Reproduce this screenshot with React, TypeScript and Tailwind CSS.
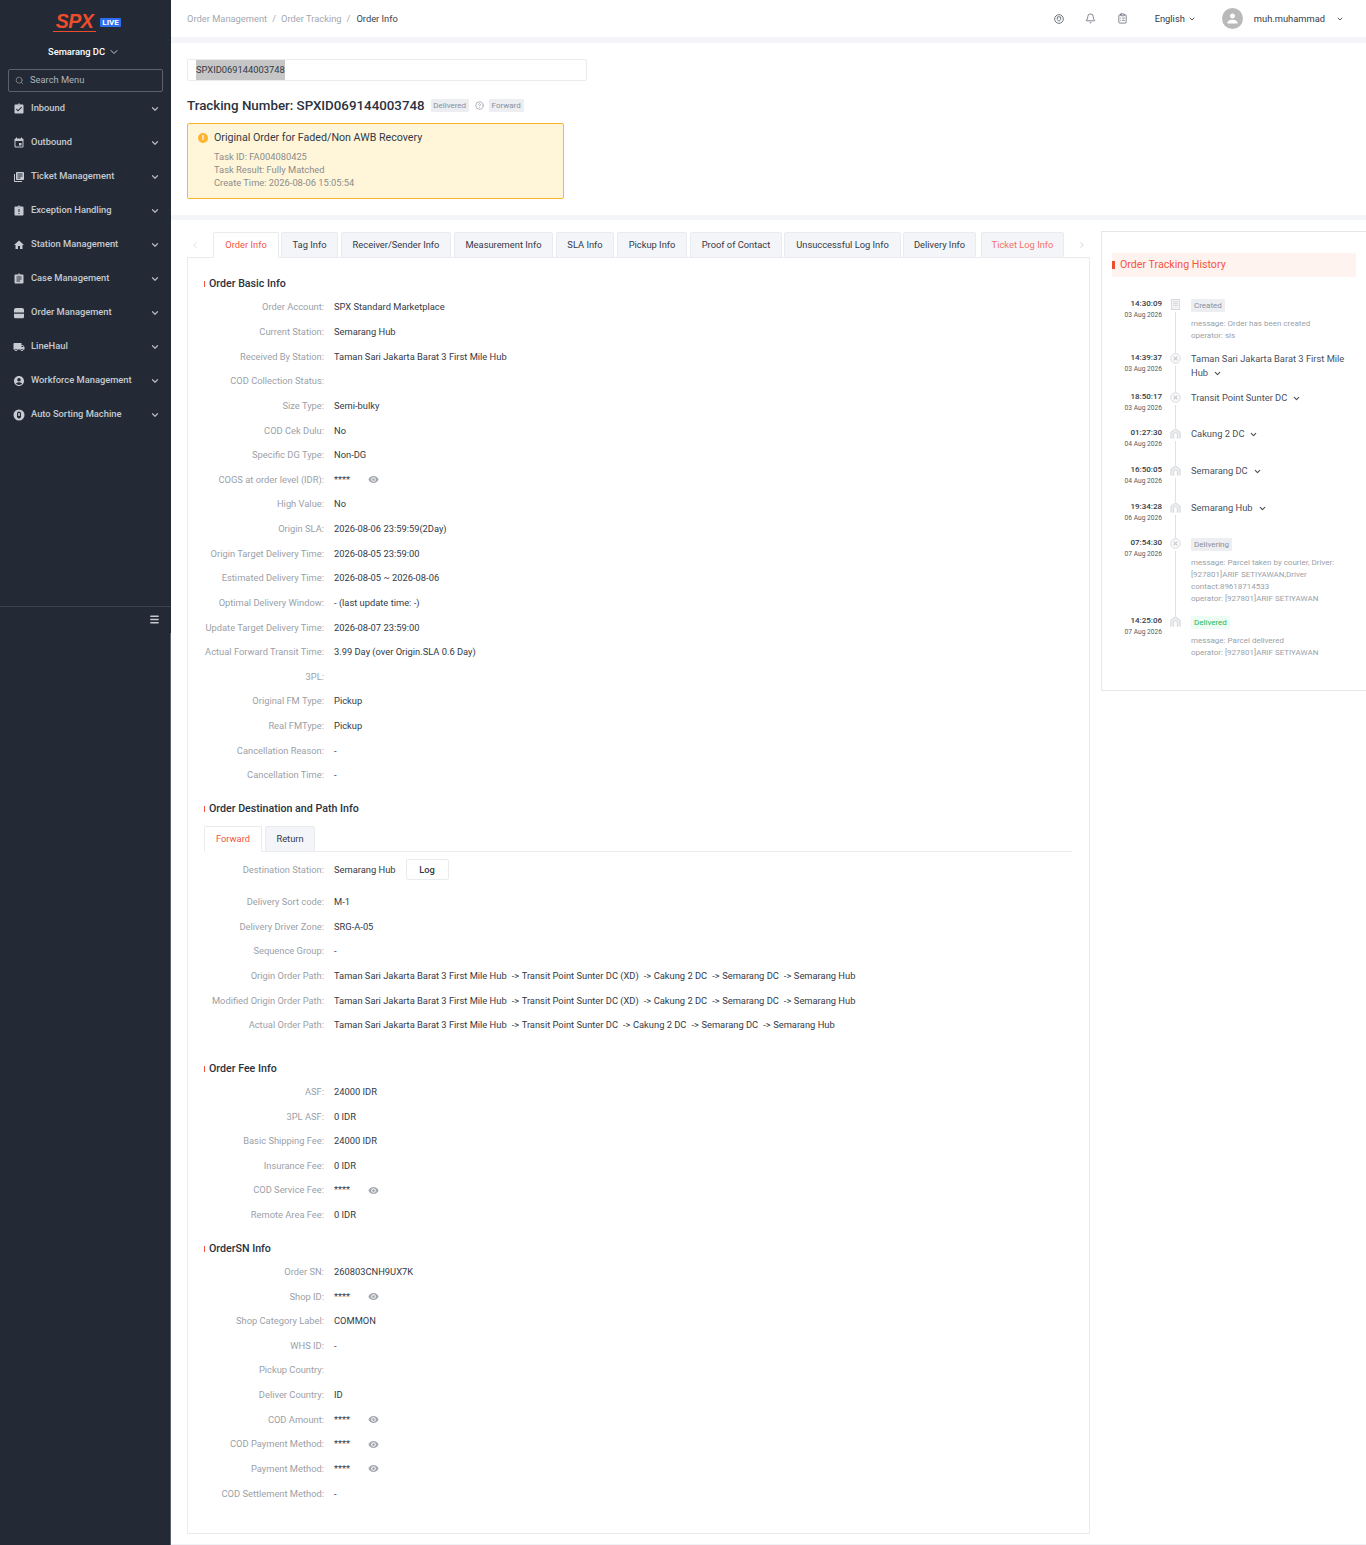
import React from 'react';
import { ChevronDown, ChevronLeft, ChevronRight, Search, Bell, ClipboardList, Menu, HelpCircle } from 'lucide-react';
import { MdAssignmentTurnedIn, MdEvent, MdLibraryBooks, MdAssignmentLate, MdHome, MdAssignment, MdLocalShipping, MdAccountCircle, MdPerson, MdRemoveRedEye } from 'react-icons/md';

function OrderIcon({ className }: { className?: string }) {
  return (
    <svg viewBox="0 0 12 12" className={className} fill="currentColor">
      <path d="M3 1h6a2 2 0 0 1 2 2v2.4H1V3a2 2 0 0 1 2-2z" />
      <path d="M1 6.8h10V10a1.2 1.2 0 0 1-1.2 1.2H2.2A1.2 1.2 0 0 1 1 10z" />
    </svg>
  );
}

function SortIcon({ className }: { className?: string }) {
  return (
    <svg viewBox="0 0 12 12" className={className}>
      <circle cx="6" cy="6" r="5.5" fill="currentColor" />
      <rect x="4" y="2.5" width="4" height="7" rx="2" fill="#232a35" />
      <rect x="5.2" y="4" width="1.6" height="3" fill="currentColor" />
    </svg>
  );
}

const menu: [string, React.ComponentType<{ className?: string }>][] = [
  ['Inbound', MdAssignmentTurnedIn],
  ['Outbound', MdEvent],
  ['Ticket Management', MdLibraryBooks],
  ['Exception Handling', MdAssignmentLate],
  ['Station Management', MdHome],
  ['Case Management', MdAssignment],
  ['Order Management', OrderIcon],
  ['LineHaul', MdLocalShipping],
  ['Workforce Management', MdAccountCircle],
  ['Auto Sorting Machine', SortIcon],
];

const tabs: [string, string, string][] = [
  ['Order Info', 'w-[66px] bg-white border-b-white text-[#f4553f]', 'mr-[2px]'],
  ['Tag Info', 'w-[57px] bg-[#f4f5f9] text-[#333a47]', 'mr-[3px]'],
  ['Receiver/Sender Info', 'w-[110px] bg-[#f4f5f9] text-[#333a47]', 'mr-[3px]'],
  ['Measurement Info', 'w-[99px] bg-[#f4f5f9] text-[#333a47]', 'mr-[3px]'],
  ['SLA Info', 'w-[58px] bg-[#f4f5f9] text-[#333a47]', 'mr-[3px]'],
  ['Pickup Info', 'w-[70px] bg-[#f4f5f9] text-[#333a47]', 'mr-[3px]'],
  ['Proof of Contact', 'w-[92px] bg-[#f4f5f9] text-[#333a47]', 'mr-[2px]'],
  ['Unsuccessful Log Info', 'w-[117px] bg-[#f4f5f9] text-[#333a47]', 'mr-[2px]'],
  ['Delivery Info', 'w-[73px] bg-[#f4f5f9] text-[#333a47]', 'mr-[5px]'],
  ['Ticket Log Info', 'w-[83px] bg-[#f4f5f9] text-[#f4706a]', ''],
];

function Row({ label, value, masked, tall }: { label: string; value?: React.ReactNode; masked?: boolean; tall?: boolean }) {
  return (
    <div className={`flex items-center ${tall ? 'mb-[4px] h-[32px]' : 'h-[24.63px]'}`}>
      <div className="w-[120px] shrink-0 text-right text-[#9b9fa8] whitespace-nowrap">{label}:</div>
      <div className="ml-[10px] flex items-center text-[#333a47] whitespace-nowrap">
        {masked ? (
          <>
            <span className="w-[34px]">****</span>
            <MdRemoveRedEye className="h-[11px] w-[11px] text-[#a3a7af]" />
          </>
        ) : (
          value
        )}
      </div>
    </div>
  );
}

function Title({ children }: { children: React.ReactNode }) {
  return (
    <div className="flex h-[16px] items-center text-[10.67px] font-medium text-[#2b3240]">
      <span className="mr-[4px] h-[6px] w-[1px] bg-[#f4553f]" />
      {children}
    </div>
  );
}

function PathText({ path }: { path: string[] }) {
  return (
    <span>
      {path.map((p, i) => (
        <React.Fragment key={p}>
          {i > 0 && <span className="inline-block w-[15px] pl-[5px]">-&gt;</span>}
          {p}
        </React.Fragment>
      ))}
    </span>
  );
}

const basic: [string, string?, boolean?][] = [
  ['Order Account', 'SPX Standard Marketplace'],
  ['Current Station', 'Semarang Hub'],
  ['Received By Station', 'Taman Sari Jakarta Barat 3 First Mile Hub'],
  ['COD Collection Status', ''],
  ['Size Type', 'Semi-bulky'],
  ['COD Cek Dulu', 'No'],
  ['Specific DG Type', 'Non-DG'],
  ['COGS at order level (IDR)', '', true],
  ['High Value', 'No'],
  ['Origin SLA', '2026-08-06 23:59:59(2Day)'],
  ['Origin Target Delivery Time', '2026-08-05 23:59:00'],
  ['Estimated Delivery Time', '2026-08-05 ~ 2026-08-06'],
  ['Optimal Delivery Window', '- (last update time: -)'],
  ['Update Target Delivery Time', '2026-08-07 23:59:00'],
  ['Actual Forward Transit Time', '3.99 Day (over Origin.SLA 0.6 Day)'],
  ['3PL', ''],
  ['Original FM Type', 'Pickup'],
  ['Real FMType', 'Pickup'],
  ['Cancellation Reason', '-'],
  ['Cancellation Time', '-'],
];

const originPath = ['Taman Sari Jakarta Barat 3 First Mile Hub', 'Transit Point Sunter DC (XD)', 'Cakung 2 DC', 'Semarang DC', 'Semarang Hub'];
const actualPath = ['Taman Sari Jakarta Barat 3 First Mile Hub', 'Transit Point Sunter DC', 'Cakung 2 DC', 'Semarang DC', 'Semarang Hub'];

const dest: [string, React.ReactNode][] = [
  ['Delivery Sort code', 'M-1'],
  ['Delivery Driver Zone', 'SRG-A-05'],
  ['Sequence Group', '-'],
  ['Origin Order Path', <PathText path={originPath} />],
  ['Modified Origin Order Path', <PathText path={originPath} />],
  ['Actual Order Path', <PathText path={actualPath} />],
];

const fee: [string, string?, boolean?][] = [
  ['ASF', '24000 IDR'],
  ['3PL ASF', '0 IDR'],
  ['Basic Shipping Fee', '24000 IDR'],
  ['Insurance Fee', '0 IDR'],
  ['COD Service Fee', '', true],
  ['Remote Area Fee', '0 IDR'],
];

const sn: [string, string?, boolean?][] = [
  ['Order SN', '260803CNH9UX7K'],
  ['Shop ID', '', true],
  ['Shop Category Label', 'COMMON'],
  ['WHS ID', '-'],
  ['Pickup Country', ''],
  ['Deliver Country', 'ID'],
  ['COD Amount', '', true],
  ['COD Payment Method', '', true],
  ['Payment Method', '', true],
  ['COD Settlement Method', '-'],
];

type Ev = {
  time: string;
  date: string;
  icon: 'doc' | 'x' | 'bank';
  h: string;
  tag?: string;
  title?: string;
  title2?: string;
  lines?: string[];
  last?: boolean;
};

const events: Ev[] = [
  { time: '14:30:09', date: '03 Aug 2026', icon: 'doc', h: 'h-[54px]', tag: 'Created', lines: ['message: Order has been created', 'operator: sls'] },
  { time: '14:39:37', date: '03 Aug 2026', icon: 'x', h: 'h-[39px]', title: 'Taman Sari Jakarta Barat 3 First Mile', title2: 'Hub' },
  { time: '18:50:17', date: '03 Aug 2026', icon: 'x', h: 'h-[36px]', title2: 'Transit Point Sunter DC' },
  { time: '01:27:30', date: '04 Aug 2026', icon: 'bank', h: 'h-[37px]', title2: 'Cakung 2 DC' },
  { time: '16:50:05', date: '04 Aug 2026', icon: 'bank', h: 'h-[37px]', title2: 'Semarang DC' },
  { time: '19:34:28', date: '06 Aug 2026', icon: 'bank', h: 'h-[36px]', title2: 'Semarang Hub' },
  { time: '07:54:30', date: '07 Aug 2026', icon: 'x', h: 'h-[78px]', tag: 'Delivering', lines: ['message: Parcel taken by courier, Driver:', '[927801]ARIF SETIYAWAN,Driver', 'contact:89618714533', 'operator: [927801]ARIF SETIYAWAN'] },
  { time: '14:25:06', date: '07 Aug 2026', icon: 'bank', h: 'h-[54px]', tag: 'Delivered', lines: ['message: Parcel delivered', 'operator: [927801]ARIF SETIYAWAN'], last: true },
];

function EvIcon({ k }: { k: Ev['icon'] }) {
  if (k === 'doc')
    return (
      <svg viewBox="0 0 12 12" className="h-[11px] w-[11px] shrink-0">
        <rect x="1.5" y="0.5" width="9" height="11" fill="#f1f2f4" stroke="#d5d7dc" />
        <path d="M3.5 3h5M3.5 5h5M3.5 7h5" stroke="#d5d7dc" />
      </svg>
    );
  if (k === 'x')
    return (
      <svg viewBox="0 0 12 12" className="h-[11px] w-[11px] shrink-0">
        <circle cx="6" cy="6" r="5.2" fill="#fafafb" stroke="#d5d7dc" />
        <path d="M4 4l4 4M8 4l-4 4" stroke="#c4c7cd" strokeWidth="1.2" />
      </svg>
    );
  return (
    <svg viewBox="0 0 12 12" className="h-[11px] w-[11px] shrink-0">
      <path d="M1 11.5V4.5L6 1l5 3.5v7" fill="#eceef0" stroke="#d0d2d8" />
      <path d="M4 11.5V7a2 2 0 0 1 4 0v4.5" fill="#fff" stroke="#d0d2d8" />
    </svg>
  );
}

export default function App() {
  return (
    <div className="flex h-[1545px] w-[1366px] overflow-hidden bg-[#f4f5f9] text-[9.33px] leading-[12px] text-[#333a47] [font-family:Roboto,'Liberation_Sans',sans-serif]">
      <aside className="flex w-[171px] shrink-0 flex-col bg-[#232a35]">
        <div className="flex h-[44px] items-center justify-center pl-[3px]">
          <div className="relative mr-[4px] flex h-[21px] w-[43px] flex-col items-center">
            <span className="text-[19.5px] font-bold italic leading-[19px] tracking-[-0.5px] text-[#ee4d2d] [font-family:'Liberation_Sans',sans-serif]">SPX</span>
            <span className="h-[1px] w-[43px] shrink-0 -skew-x-12 bg-[#ee4d2d]" />
          </div>
          <span className="w-[21px] rounded-[1px] bg-[#2d6ff0] text-center text-[8px] font-bold leading-[9px] text-white">LIVE</span>
        </div>
        <div className="flex h-[16px] items-center justify-center pr-[3px] font-medium text-white">
          Semarang DC
          <ChevronDown className="ml-[3px] h-[12px] w-[12px] text-[#c6cad1]" strokeWidth={2} />
        </div>
        <div className="mx-[8px] mt-[9px] flex h-[23px] items-center rounded-[2px] border border-[#5b626d] pl-[6px] text-[#aeb3bd]">
          <Search className="h-[9px] w-[9px] text-[#8b909a]" />
          <span className="ml-[6px] -translate-y-[1px]">Search Menu</span>
        </div>
        <nav>
          {menu.map(([name, Ic]) => (
            <div key={name} className="flex h-[34px] items-center pl-[13px] pr-[11px] font-medium text-[#c6cad1]">
              <Ic className="h-[12px] w-[12px] text-[#c6cad1]" />
              <span className="ml-[6px] flex-1 -translate-y-[1px]">{name}</span>
              <ChevronDown className="h-[10px] w-[10px] text-[#b0b4bc]" strokeWidth={3} />
            </div>
          ))}
        </nav>
        <div className="mt-[174px] flex h-[27px] shrink-0 items-center justify-end border-t border-[#3d444f] pr-[11px]">
          <Menu className="h-[11px] w-[11px] -translate-y-[1px] text-[#c6cad1]" strokeWidth={3} />
        </div>
        <div className="flex flex-1 justify-end">
          <span className="w-[1px] bg-[#5b626d]" />
        </div>
      </aside>

      <main className="min-w-0 flex-1">
        <header className="flex h-[37px] items-center bg-white pl-[16px] pr-[22px]">
          <div className="flex flex-1 items-center text-[#a3a7af]">
            <span>Order Management</span>
            <span className="mx-[5px]">/</span>
            <span>Order Tracking</span>
            <span className="ml-[5px] mr-[6px]">/</span>
            <span className="text-[#3a414e]">Order Info</span>
          </div>
          <svg viewBox="0 0 12 12" fill="none" className="h-[10px] w-[10px] text-[#555b66]" stroke="currentColor">
            <circle cx="6" cy="6" r="5.2" />
            <path d="M4 3.5h4v3.2L6 8.8 4 6.7z" />
          </svg>
          <Bell className="ml-[21px] h-[11px] w-[11px] text-[#555b66]" strokeWidth={1.6} />
          <ClipboardList className="ml-[21px] h-[11px] w-[11px] text-[#555b66]" strokeWidth={1.6} />
          <span className="ml-[27px]">English</span>
          <ChevronDown className="ml-[3px] h-[8px] w-[8px]" strokeWidth={2.5} />
          <span className="ml-[26px] flex h-[21px] w-[21px] items-center justify-center rounded-full bg-[#b9b9b9]">
            <MdPerson className="h-[15px] w-[15px] text-white" />
          </span>
          <span className="ml-[11px]">muh.muhammad</span>
          <ChevronDown className="ml-[11px] h-[8px] w-[8px]" strokeWidth={2.5} />
        </header>

        <section className="mt-[6px] h-[172px] bg-white pl-[16px] pt-[16px]">
          <div className="flex h-[22px] w-[400px] items-center rounded-[2px] border border-[#eaebef] pl-[8px]">
            <span className="bg-[#c6c6c6] py-[4px] text-[#333a47]">SPXID069144003748</span>
          </div>
          <div className="mt-[18px] flex h-[13px] items-center">
            <span className="text-[13.33px] font-medium text-[#2b3240]">Tracking Number: SPXID069144003748</span>
            <span className="ml-[6px] w-[38px] rounded-[1px] bg-[#edeef2] text-center text-[8px] leading-[13px] text-[#8a8f9a]">Delivered</span>
            <HelpCircle className="ml-[6px] h-[9px] w-[9px] text-[#9b9fa8]" />
            <span className="ml-[5px] w-[35px] rounded-[1px] bg-[#edeef2] text-center text-[8px] leading-[13px] text-[#8a8f9a]">Forward</span>
          </div>
          <div className="mt-[11px] h-[76px] w-[377px] rounded-[2px] border border-[#fdb52c] bg-[#fff6d9] pl-[10px] pt-[6px]">
            <div className="flex h-[16px] items-center text-[10.67px] text-[#333a47]">
              <span className="mr-[6px] flex h-[10px] w-[10px] items-center justify-center rounded-full bg-[#fdb52c] text-[8px] font-bold text-white">!</span>
              Original Order for Faded/Non AWB Recovery
            </div>
            <div className="mt-[4px] pl-[16px] leading-[13px] text-[#8c8c8c]">
              <div>Task ID: FA004080425</div>
              <div>Task Result: Fully Matched</div>
              <div>Create Time: 2026-08-06 15:05:54</div>
            </div>
          </div>
        </section>

        <section className="mt-[5px] flex h-[1325px] border-b border-[#f0f1f4] bg-white pl-[16px]">
          <div className="w-[903px] shrink-0 pt-[12px]">
            <div className="flex h-[25px] items-end">
              <div className="flex w-[26px] self-center">
                <ChevronLeft className="ml-[3px] h-[10px] w-[10px] text-[#d5d7dc]" />
              </div>
              {tabs.map(([t, c, m]) => (
                <div key={t} className={`relative top-[1px] flex h-[26px] items-center justify-center rounded-t-[2px] border border-[#eaebef] ${c} ${m}`}>
                  {t}
                </div>
              ))}
              <ChevronRight className="ml-[13px] h-[10px] w-[10px] self-center text-[#c4c7cd]" />
            </div>
            <div className="h-[1277px] w-[903px] border border-[#eaebef] pl-[16px] pr-[17px] pt-[18px]">
              <Title>Order Basic Info</Title>
              <div className="mt-[3.15px]">
                {basic.map(([l, v, m]) => (
                  <Row key={l} label={l} value={v} masked={m} />
                ))}
              </div>
              <div className="mt-[13.25px]">
                <Title>Order Destination and Path Info</Title>
              </div>
              <div className="mt-[9px] flex h-[26px] items-end border-b border-[#eaebef]">
                <div className="relative top-[1px] mr-[3px] flex h-[26px] w-[58px] items-center justify-center rounded-t-[2px] border border-[#eaebef] border-b-white bg-white text-[#f4553f]">Forward</div>
                <div className="relative top-[1px] flex h-[26px] w-[50px] items-center justify-center rounded-t-[2px] border border-[#eaebef] bg-[#f4f5f9]">Return</div>
              </div>
              <div className="mt-[2px]">
                <Row tall label="Destination Station" value={
                  <>
                    Semarang Hub
                    <span className="ml-[10px] flex h-[21px] w-[43px] items-center justify-center rounded-[2px] border border-[#eaebef] font-medium">Log</span>
                  </>
                } />
                {dest.map(([l, v]) => (
                  <Row key={l} label={l} value={v} />
                ))}
              </div>
              <div className="mt-[23.6px]">
                <Title>Order Fee Info</Title>
              </div>
              <div className="mt-[2.4px]">
                {fee.map(([l, v, m]) => (
                  <Row key={l} label={l} value={v} masked={m} />
                ))}
              </div>
              <div className="mt-[13.6px]">
                <Title>OrderSN Info</Title>
              </div>
              <div className="mt-[2.7px]">
                {sn.map(([l, v, m]) => (
                  <Row key={l} label={l} value={v} masked={m} />
                ))}
              </div>
            </div>
          </div>

          <div className="ml-[11px] mt-[11px] h-[460px] w-[280px] shrink-0 border border-[#e6e7eb] pl-[10px] pt-[21px]">
            <div className="flex h-[24px] w-[244px] items-center rounded-[2px] bg-[#fef3ef] text-[10.67px] text-[#f4553f]">
              <span className="mr-[5px] h-[8px] w-[3px] bg-[#ee4d2d]" />
              Order Tracking History
            </div>
            <div className="mt-[22px]">
              {events.map((e) => (
                <div key={e.time} className={`flex ${e.h}`}>
                  <div className="-mt-[1px] w-[50px] shrink-0 text-right">
                    <div className="text-[8px] font-medium leading-[11px] text-[#333a47]">{e.time}</div>
                    <div className="mt-[1px] text-[6.67px] leading-[10px] text-[#555b66]">{e.date}</div>
                  </div>
                  <div className="flex w-[29px] shrink-0 flex-col items-center pr-[3px]">
                    <EvIcon k={e.icon} />
                    {!e.last && <span className="mt-[2px] w-[1px] flex-1 bg-[#e0e1e5]" />}
                  </div>
                  <div className="w-[170px]">
                    {e.tag && (
                      <span className={`inline-block h-[13px] rounded-[1px] px-[3px] text-[8px] leading-[13px] ${e.tag === 'Delivered' ? 'bg-[#edfdf3] text-[#22b856]' : 'bg-[#edeef2] text-[#8a8f9a]'}`}>{e.tag}</span>
                    )}
                    {e.lines && (
                      <div className="mt-[6px] whitespace-nowrap text-[8px] leading-[12px] text-[#9b9fa8]">
                        {e.lines.map((l) => (
                          <div key={l}>{l}</div>
                        ))}
                      </div>
                    )}
                    {e.title && <div className="-mt-[1px] whitespace-nowrap leading-[14px] text-[#4a505c]">{e.title}</div>}
                    {e.title2 && (
                      <div className={`flex items-center leading-[14px] text-[#4a505c] ${e.title ? '' : '-mt-[1px]'}`}>
                        {e.title2}
                        <ChevronDown className="ml-[5px] h-[9px] w-[9px]" strokeWidth={3} />
                      </div>
                    )}
                  </div>
                </div>
              ))}
            </div>
          </div>
        </section>
      </main>
    </div>
  );
}
